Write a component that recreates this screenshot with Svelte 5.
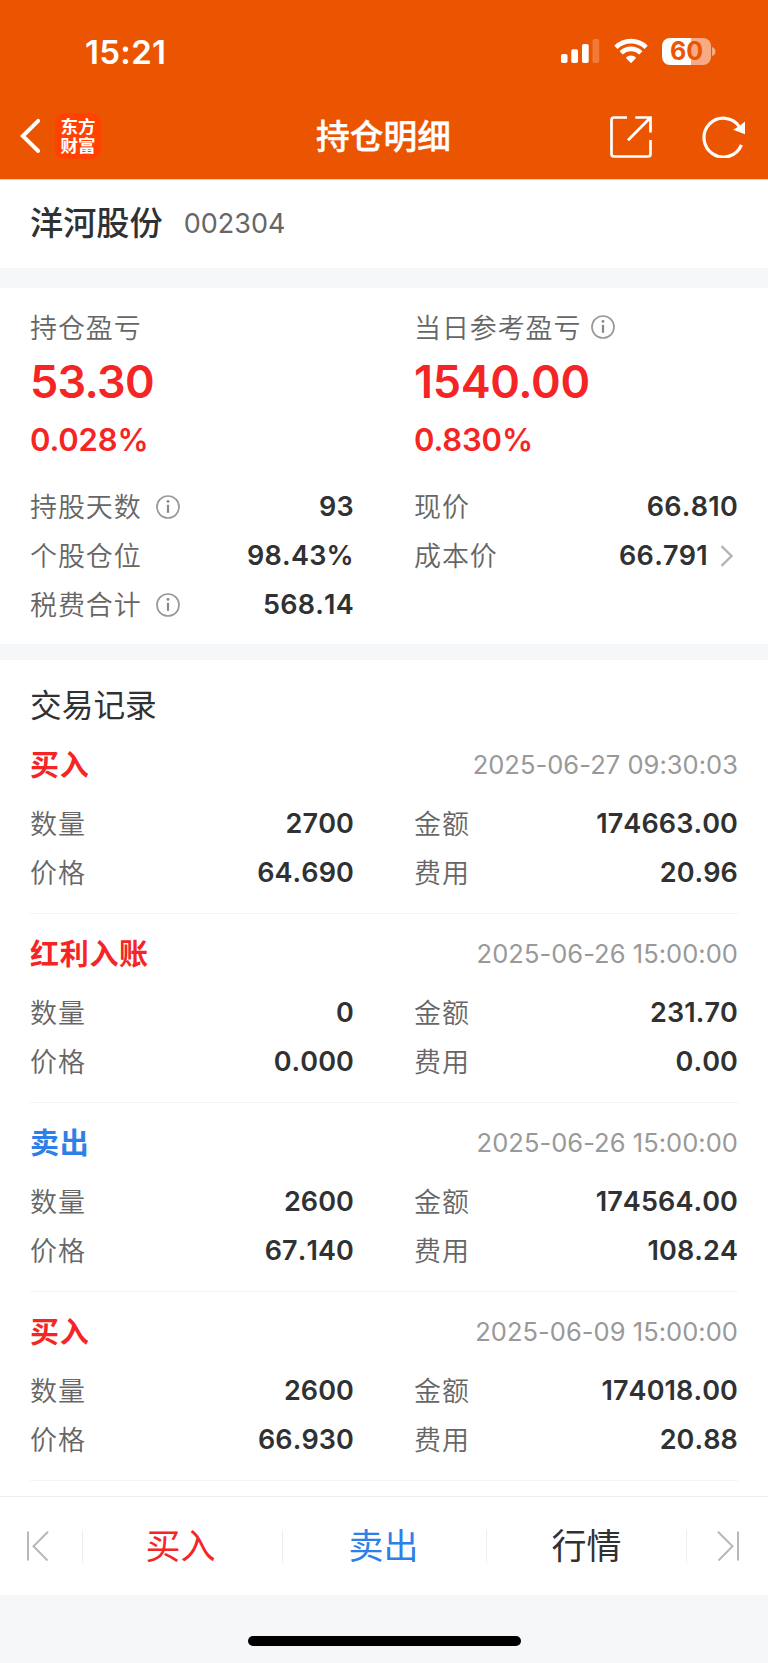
<script>
  const records = [
    { type: '买入', tone: 'red', time: '2025-06-27 09:30:03', qty: '2700', amount: '174663.00', price: '64.690', fee: '20.96' },
    { type: '红利入账', tone: 'red', time: '2025-06-26 15:00:00', qty: '0', amount: '231.70', price: '0.000', fee: '0.00' },
    { type: '卖出', tone: 'blue', time: '2025-06-26 15:00:00', qty: '2600', amount: '174564.00', price: '67.140', fee: '108.24' },
    { type: '买入', tone: 'red', time: '2025-06-09 15:00:00', qty: '2600', amount: '174018.00', price: '66.930', fee: '20.88' }
  ];
</script>

{#snippet info()}
  <svg class="info" width="24" height="24" viewBox="0 0 24 24" fill="none">
    <circle cx="12" cy="12" r="11" stroke="#999" stroke-width="1.7" />
    <path d="M12 9.8v8" stroke="#888" stroke-width="2.2" />
    <circle cx="12" cy="6.4" r="1.4" fill="#888" />
  </svg>
{/snippet}

{#snippet pair(label, value)}
  <div class="pair"><span class="label">{label}</span><span class="value">{value}</span></div>
{/snippet}

<div class="page">
  <header>
    <div class="status">
      <span class="time">15:21</span>
      <div class="system">
        <svg width="39" height="26" viewBox="0 0 39 26" fill="#fff">
          <rect x="0" y="16" width="6.5" height="9" rx="1.8" />
          <rect x="10.3" y="11.3" width="6.7" height="13.7" rx="1.8" />
          <rect x="21" y="6" width="6.7" height="19" rx="1.8" />
          <rect x="31.5" y="1" width="6.7" height="24" rx="1.8" opacity=".22" />
        </svg>
        <svg class="wifi" width="34" height="26" viewBox="0 0 34 26" fill="none" stroke="#fff" stroke-width="4.6">
          <path d="M1.9 9.3a21.6 21.6 0 0 1 30.2 0" />
          <path d="M7.2 14.9a14 14 0 0 1 19.6 0" />
          <path d="M17 25.2l-5.2-5.5a7.4 7.4 0 0 1 10.4 0z" fill="#fff" stroke="none" />
        </svg>
        <div class="battery"><span>60</span></div>
        <svg class="tip" width="4" height="9" viewBox="0 0 4 9"><path d="M0 0Q3.5 1 3.5 4.500T0 9z" fill="#fff" opacity=".5" /></svg>
      </div>
    </div>
    <nav>
      <div class="left">
        <svg width="20" height="36" viewBox="0 0 20 36" fill="none"><path d="M18.200 2.900L2.800 18l15.400 15" stroke="#fff" stroke-width="3.900" stroke-linecap="round" stroke-linejoin="miter" /></svg>
        <div class="logo"><span>东方</span><span>财富</span></div>
      </div>
      <h1>持仓明细</h1>
      <div class="right">
        <svg width="42" height="42" viewBox="0 0 42 42" fill="none" stroke="#fff" stroke-width="2.700">
          <path d="M17 1.500H4Q1.500 1.500 1.500 4V38Q1.500 40.500 4 40.500H38Q40.500 40.500 40.500 38V24" />
          <path d="M25.300 1.500H40.500V16.500M39.800 2.200L18 24.200" />
        </svg>
        <svg class="reload" width="44" height="42" viewBox="0 0 44 42" fill="none">
          <path d="M39.400 28.800A19.400 19.400 0 1 1 37.500 10.800" stroke="#fff" stroke-width="3.200" />
          <path d="M43 5.400V18.300L31.100 13.700Q37 11.200 43 5.400z" fill="#fff" />
        </svg>
      </div>
    </nav>
  </header>

  <section class="stock"><h2>洋河股份</h2><span>002304</span></section>

  <section class="summary">
    <div class="col">
      <div class="head label">持仓盈亏</div>
      <div class="big">53.30</div>
      <div class="pct">0.028%</div>
      <div class="pair"><span class="label">持股天数{@render info()}</span><span class="value">93</span></div>
      {@render pair('个股仓位', '98.43%')}
      <div class="pair"><span class="label">税费合计{@render info()}</span><span class="value">568.14</span></div>
    </div>
    <div class="col">
      <div class="head label tight">当日参考盈亏{@render info()}</div>
      <div class="big wide">1540.00</div>
      <div class="pct">0.830%</div>
      {@render pair('现价', '66.810')}
      <div class="pair">
        <span class="label">成本价</span>
        <span class="value more">66.791<svg width="14" height="22" viewBox="0 0 14 22" fill="none"><path d="M1.500 1.200L11.500 11L1.500 20.800" stroke="#b5b5b5" stroke-width="2.400" /></svg></span>
      </div>
    </div>
  </section>

  <section class="history">
    <h3>交易记录</h3>
    {#each records as r}
      <article>
        <div class="top"><span class="type {r.tone}">{r.type}</span><time>{r.time}</time></div>
        <div class="grid">
          {@render pair('数量', r.qty)}
          {@render pair('金额', r.amount)}
          {@render pair('价格', r.price)}
          {@render pair('费用', r.fee)}
        </div>
      </article>
    {/each}
  </section>

  <footer>
    <div class="edge first">
      <svg width="24" height="30" viewBox="0 0 24 30" fill="none" stroke="#b8b8b8" stroke-width="2"><path d="M2 .5V29.500M22 .8L7.500 15.300L21.500 29.500" /></svg>
    </div>
    <div class="action red">买入</div>
    <div class="action blue">卖出</div>
    <div class="action quote">行情</div>
    <div class="edge last">
      <svg width="24" height="30" viewBox="0 0 24 30" fill="none" stroke="#b8b8b8" stroke-width="2"><path d="M22 .5V29.500M2 .8L16.500 15.300L2.500 29.500" /></svg>
    </div>
  </footer>
  <div class="home"><div></div></div>
</div>

<style>
  :global(body) { margin: 0; background: #f6f7f9; }
  .page { width: 768px; height: 1663px; overflow: hidden; display: flex; flex-direction: column; background: #f6f7f9; color: #303133; font-family: Inter, "Noto Sans CJK SC", sans-serif; }
  h1, h2, h3 { margin: 0; font-weight: 500; }
  svg { display: block; flex: none; }
  header { height: 180px; flex: none; background: #eb5502; color: #fff; border-bottom: 1px solid #f9cbb0; box-sizing: border-box; }
  .status { height: 102px; display: flex; justify-content: space-between; align-items: center; padding: 0 52px 0 85px; }
  .time { font-size: 33px; font-weight: 600; line-height: 40px; letter-spacing: .3px; padding-top: 1px; }
  .system { display: flex; align-items: center; }
  .wifi { margin: 0 14px 0 14px; }
  .battery { width: 49px; height: 27px; border-radius: 8px; background: linear-gradient(90deg, #fff 60%, #f6ab82 60%); display: flex; justify-content: center; align-items: center; color: #eb5502; font-size: 25px; font-weight: 700; line-height: 27px; }
  .battery span { padding-top: 1px; }
  .tip { margin-left: 1px; }
  nav { height: 68px; display: grid; grid-template-columns: 1fr auto 1fr; align-items: center; padding: 0 22px 0 20px; }
  .left, .right { display: flex; align-items: center; }
  .left { gap: 15px; }
  .right { justify-content: flex-end; gap: 50px; padding-top: 2px; }
  .logo { width: 46px; height: 46px; border-radius: 9px; background: #ff4200; display: flex; flex-direction: column; align-items: center; justify-content: center; font-size: 17.5px; font-weight: 700; line-height: 19px; }
  .logo span { height: 19px; }
  h1 { font-size: 33.7px; line-height: 50px; padding: 2px 0 0 1px; -webkit-text-stroke: .4px #fff; }
  .stock { flex: none; height: 88px; background: #fff; display: flex; align-items: center; padding: 0 30px; gap: 21px; }
  .stock h2 { font-size: 33.2px; line-height: 50px; padding-bottom: 2px; }
  .stock span { font-size: 27px; color: #666; line-height: 40px; }
  .summary { flex: none; margin-top: 20px; height: 356px; box-sizing: border-box; background: #fff; padding: 12px 30px 0; display: grid; grid-template-columns: 324px 324px; gap: 60px; }
  .label { display: flex; align-items: center; font-size: 27px; letter-spacing: .9px; font-weight: 350; color: #666; padding-bottom: 3px; box-sizing: border-box; }
  .label .info { margin: 3px 0 0 14px; }
  .tight .info { margin: 1px 0 0 9.500px; }
  .head { height: 54px; padding-bottom: 1px; }
  .big { height: 56px; line-height: 56px; font-size: 45px; font-weight: 600; letter-spacing: -.7px; color: #f52525; }
  .big.wide { letter-spacing: -.35px; }
  .pct { height: 59px; line-height: 59px; margin-bottom: 13px; font-size: 31px; font-weight: 600; letter-spacing: -.15px; color: #f52525; }
  .pair { height: 49.2px; display: flex; justify-content: space-between; align-items: center; }
  .value { font-size: 27px; font-weight: 600; line-height: 40px; font-kerning: none; letter-spacing: .1px; }
  .summary .value { padding-top: 1px; letter-spacing: .25px; }
  .more { display: flex; align-items: center; gap: 12px; padding-right: 4px; }
  .history { flex: none; margin-top: 16px; height: 836px; background: #fff; padding: 0 30px; }
  h3 { height: 65px; padding-top: 21px; box-sizing: border-box; line-height: 50px; font-size: 31.7px; font-weight: 400; }
  article { height: 189px; box-sizing: border-box; border-bottom: 1px solid #f3f3f3; padding-top: 9px; }
  .top { height: 60px; display: flex; justify-content: space-between; align-items: center; }
  .type { font-size: 29px; font-weight: 600; letter-spacing: .7px; padding-bottom: 2px; }
  time { font-size: 25.500px; letter-spacing: .04px; color: #999; }
  .red { color: #f52525; }
  .blue { color: #2e80e8; }
  .grid { margin-top: 5px; display: grid; grid-template-columns: 324px 324px; column-gap: 60px; }
  footer { flex: none; height: 99px; box-sizing: border-box; border-top: 1px solid #eee; background: #fff; display: grid; grid-template-columns: 83px 200px 204px 200px 81px; align-items: center; }
  .action { font-size: 35px; line-height: 50px; padding-right: 4px; }
  .edge, .action { display: flex; justify-content: center; align-items: center; height: 33px; border-right: 1px solid #eee; box-sizing: border-box; }
  .action.blue { padding-right: 2px; }
  .action.quote { padding-right: 0; }
  .edge.first { padding-right: 6px; }
  .edge.last { border: 0; padding-left: 1px; }
  .home { flex: 1; display: flex; justify-content: center; align-items: flex-start; padding-top: 41px; box-sizing: border-box; }
  .home div { width: 273px; height: 10px; border-radius: 5px; background: #000; }
</style>
